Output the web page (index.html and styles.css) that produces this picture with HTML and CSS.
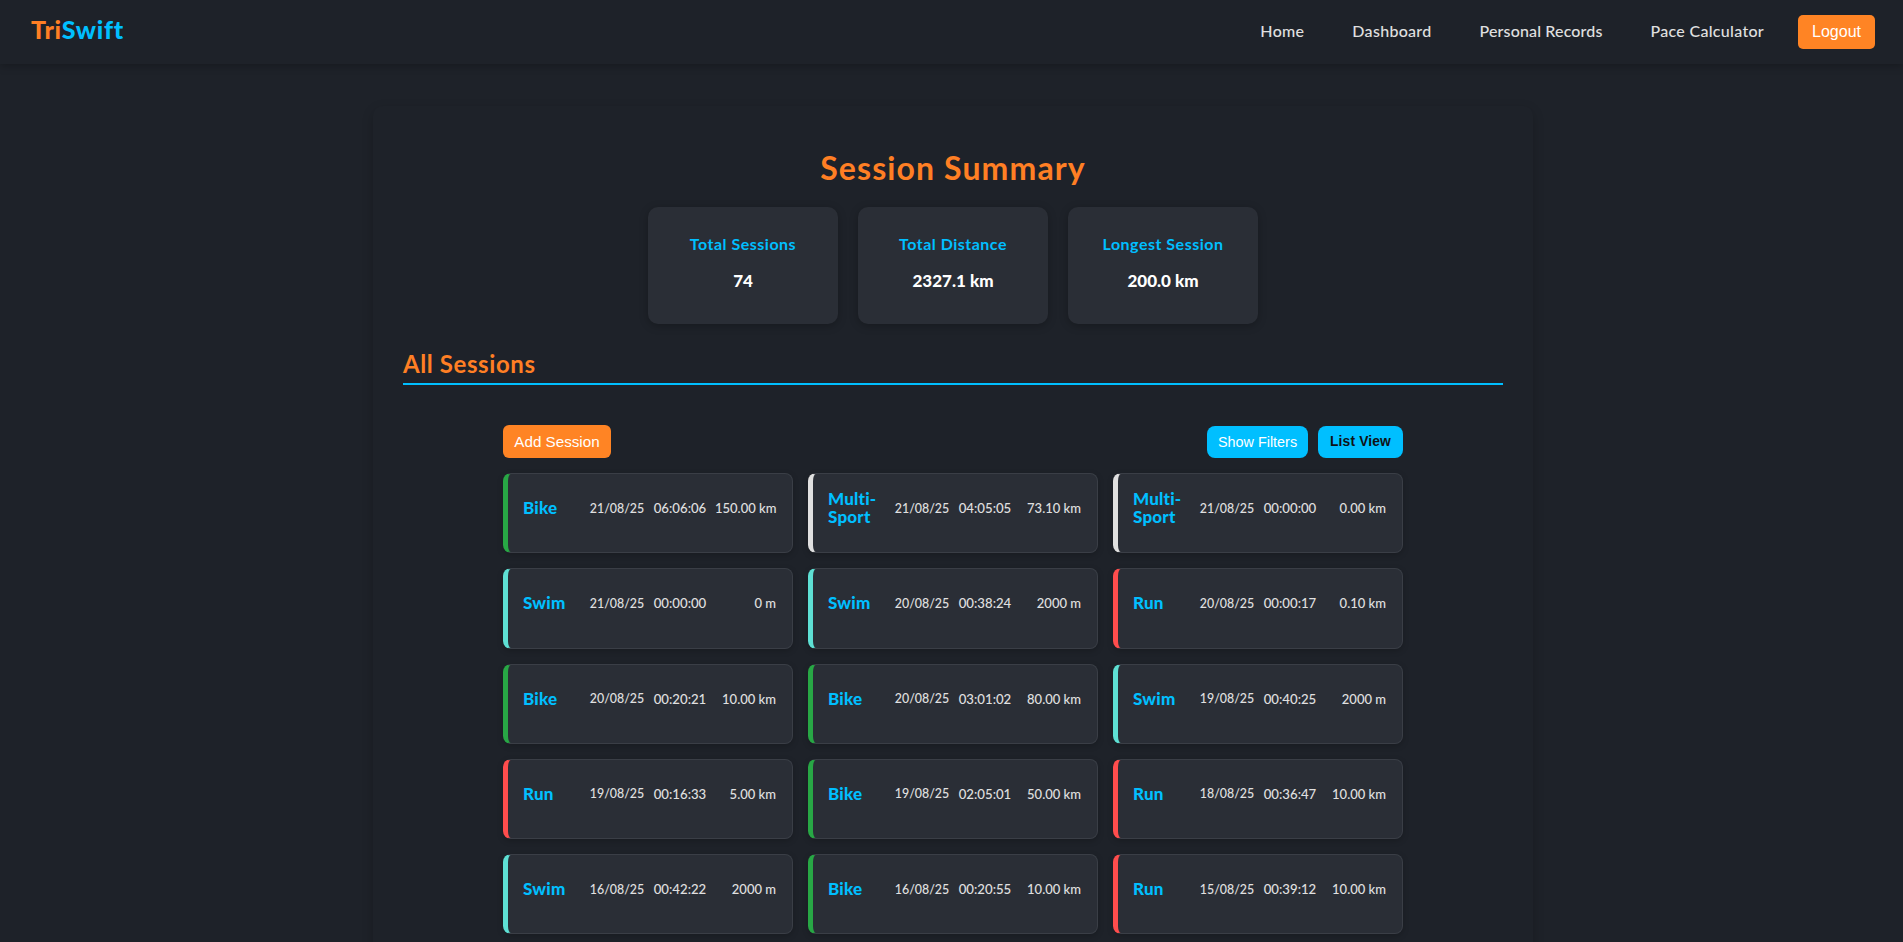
FILE: index.html
```html
<!DOCTYPE html>
<html lang="en">
<head>
<meta charset="utf-8">
<title>TriSwift</title>
<link rel="stylesheet" href="styles.css">
</head>
<body>
<nav class="nav">
  <a class="logo"><span class="logo-a">Tri</span><span class="logo-b">Swift</span></a>
  <div class="links">
    <a>Home</a><a>Dashboard</a><a class="tight">Personal Records</a><a>Pace Calculator</a>
    <button class="logout">Logout</button>
  </div>
</nav>
<main class="main">
  <h1 class="title">Session Summary</h1>
  <section class="stats">
    <div class="stat"><h3>Total Sessions</h3><p>74</p></div>
    <div class="stat"><h3>Total Distance</h3><p>2327.1 km</p></div>
    <div class="stat"><h3>Longest Session</h3><p>200.0 km</p></div>
  </section>
  <h2 class="section">All Sessions</h2>
  <div class="list">
    <div class="toolbar">
      <button class="btn add">Add Session</button>
      <div class="tools">
        <button class="btn blue">Show Filters</button>
        <button class="btn blue dark">List View</button>
      </div>
    </div>
    <div class="grid">
      <div class="card bike"><div class="row"><b>Bike</b><span class="dt">21/08/25</span><span class="tm">06:06:06</span><span class="d">150.00 km</span></div></div>
      <div class="card multi"><div class="row"><b>Multi-Sport</b><span class="dt">21/08/25</span><span class="tm">04:05:05</span><span class="d">73.10 km</span></div></div>
      <div class="card multi"><div class="row"><b>Multi-Sport</b><span class="dt">21/08/25</span><span class="tm">00:00:00</span><span class="d">0.00 km</span></div></div>
      <div class="card swim"><div class="row"><b>Swim</b><span class="dt">21/08/25</span><span class="tm">00:00:00</span><span class="d">0 m</span></div></div>
      <div class="card swim"><div class="row"><b>Swim</b><span class="dt">20/08/25</span><span class="tm">00:38:24</span><span class="d">2000 m</span></div></div>
      <div class="card run"><div class="row"><b>Run</b><span class="dt">20/08/25</span><span class="tm">00:00:17</span><span class="d">0.10 km</span></div></div>
      <div class="card bike"><div class="row"><b>Bike</b><span class="dt">20/08/25</span><span class="tm">00:20:21</span><span class="d">10.00 km</span></div></div>
      <div class="card bike"><div class="row"><b>Bike</b><span class="dt">20/08/25</span><span class="tm">03:01:02</span><span class="d">80.00 km</span></div></div>
      <div class="card swim"><div class="row"><b>Swim</b><span class="dt">19/08/25</span><span class="tm">00:40:25</span><span class="d">2000 m</span></div></div>
      <div class="card run"><div class="row"><b>Run</b><span class="dt">19/08/25</span><span class="tm">00:16:33</span><span class="d">5.00 km</span></div></div>
      <div class="card bike"><div class="row"><b>Bike</b><span class="dt">19/08/25</span><span class="tm">02:05:01</span><span class="d">50.00 km</span></div></div>
      <div class="card run"><div class="row"><b>Run</b><span class="dt">18/08/25</span><span class="tm">00:36:47</span><span class="d">10.00 km</span></div></div>
      <div class="card swim"><div class="row"><b>Swim</b><span class="dt">16/08/25</span><span class="tm">00:42:22</span><span class="d">2000 m</span></div></div>
      <div class="card bike"><div class="row"><b>Bike</b><span class="dt">16/08/25</span><span class="tm">00:20:55</span><span class="d">10.00 km</span></div></div>
      <div class="card run"><div class="row"><b>Run</b><span class="dt">15/08/25</span><span class="tm">00:39:12</span><span class="d">10.00 km</span></div></div>
    </div>
  </div>
</main>
</body>
</html>
```
FILE: styles.css
```css
* { box-sizing: border-box; }
html, body { margin: 0; padding: 0; }
body { background: #1e2229; color: #e0e0e0; font-family: "Lato", "Open Sans", sans-serif; min-height: 1100px; }
.nav { height: 64px; background: #1e2229; box-shadow: 0 2px 8px rgba(0,0,0,.25); display: flex; align-items: center; justify-content: space-between; padding: 0 28px 0 31px; position: relative; }
.logo { font-size: 25px; font-weight: 900; letter-spacing: .7px; margin-top: -6px; }
.logo-a { color: #ff7f24; }
.logo-b { color: #00bfff; }
.links { display: flex; align-items: center; }
.links a { color: #e0e0e0; font-size: 16px; font-weight: 500; letter-spacing: .3px; margin-right: 48px; line-height: 1; margin-top: -3px; }
.links a.tight { letter-spacing: .15px; }
.links a:nth-child(4) { margin-right: 34px; }
.logout { width: 77px; height: 34px; background: #ff8424; color: #fff; border: 0; border-radius: 5px; font: 16px "Liberation Sans", Arial, sans-serif; padding: 0; }
.main { width: 1160px; margin: 42px 0 40px 373px; padding: 30px; border-radius: 10px; box-shadow: 0 4px 12px rgba(0,0,0,.2); }
.title { margin: 10px 0 0; text-align: center; color: #ff7f24; font-size: 32px; line-height: 44px; font-weight: 700; letter-spacing: 1.1px; }
.stats { display: flex; justify-content: center; gap: 20px; margin-top: 17px; }
.stat { width: 190px; height: 117px; background: #2a2e36; border-radius: 10px; box-shadow: 0 2px 8px rgba(0,0,0,.25); text-align: center; padding-top: 27px; }
.stat h3 { margin: 0; color: #00bfff; font-size: 16px; line-height: 20px; font-weight: 700; letter-spacing: .5px; }
.stat p { margin: 17px 0 0; color: #fff; font-size: 17px; line-height: 20px; font-weight: 900; }
.section { margin: 25px 0 0; color: #ff7f24; font-size: 24px; line-height: 29px; height: 36px; font-weight: 700; letter-spacing: .6px; border-bottom: 2px solid #00bfff; }
.list { width: 900px; margin: 39px auto 0; }
.toolbar { display: flex; justify-content: space-between; align-items: center; height: 34px; }
.tools { display: flex; gap: 10px; margin-top: 1px; }
.btn { border: 0; height: 32px; font-family: "Liberation Sans", Arial, sans-serif; padding: 0; cursor: pointer; }
.add { width: 108px; height: 33px; background: #ff8424; color: #fff; font-size: 15.2px; border-radius: 6px; }
.blue { background: #00bfff; color: #fff; font-size: 14.4px; border-radius: 8px; width: 101px; }
.dark { color: #0f1216; width: 85px; letter-spacing: .15px; font-weight: 700; font-size: 13.8px; }
.grid { display: grid; grid-template-columns: repeat(3, 290px); grid-auto-rows: 80.25px; gap: 15px; margin-top: 15px; }
.card { background: #2a2e36; border: 1px solid #3a3e46; border-left: 5px solid; border-radius: 8px; padding: 16px 19px 0 15px; box-shadow: 0 2px 6px rgba(0,0,0,.2); }
.bike { border-left-color: #28a745; }
.multi { border-left-color: #e0e0e0; }
.swim { border-left-color: #5ee0d4; }
.run { border-left-color: #ff4d4d; }
.row { display: grid; grid-template-columns: 58px 56px 54px 61px; column-gap: 8px; align-items: center; min-height: 36px; font-size: 13px; font-weight: 500; white-space: nowrap; }
.row b { color: #00bfff; font-size: 17px; font-weight: 900; line-height: 18px; letter-spacing: .2px; white-space: normal; }
.row span { text-align: center; }
.row .dt { font-size: 12.4px; }
.row .tm { font-size: 13.2px; }
.row .d { text-align: right; }
```
